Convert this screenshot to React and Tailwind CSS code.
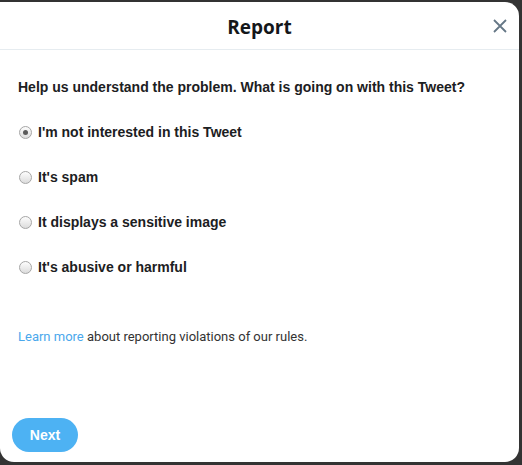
import React, { useState } from "react";

const options = [
  "I'm not interested in this Tweet",
  "It's spam",
  "It displays a sensitive image",
  "It's abusive or harmful",
];

const Radio = ({ checked }) => (
  <span className="flex items-center justify-center w-[13px] h-[13px] rounded-full border border-[#a6a6a6] bg-gradient-to-b from-[#fdfdfd] to-[#dcdcdc] shrink-0">
    {checked && <span className="w-[5px] h-[5px] rounded-full bg-[#5a5a5a]" />}
  </span>
);

export default function App() {
  const [selected, setSelected] = useState(0);

  return (
    <div className="w-[522px] h-[465px] bg-[#333333] pt-[2px] pr-[3px] pb-[3px] font-['Liberation_Sans',Arial,sans-serif]">
      <div className="h-full bg-white rounded-[14px] rounded-tl-none flex flex-col">
        {/* Header */}
        <div className="relative h-[48px] shrink-0 border-b border-[#e6ecf0] flex items-center justify-center pt-[4px]">
          <h2 className="text-[19px] font-bold text-[#14171a] font-['Open_Sans','Noto_Sans',sans-serif] leading-none">
            Report
          </h2>
          <button className="absolute right-[11px] top-[16px] w-[16px] h-[16px] flex items-center justify-center text-[#657786]">
            <svg width="14" height="14" viewBox="0 0 14 14" fill="none" stroke="currentColor" strokeWidth="1.8">
              <path d="M1 1 L13 13 M13 1 L1 13" />
            </svg>
          </button>
        </div>

        {/* Body */}
        <div className="px-[18px] pt-[29px] flex flex-col flex-1">
          <p className="text-[14px] leading-[16px] font-bold text-[#1c2022]">
            Help us understand the problem. What is going on with this Tweet?
          </p>

          <div className="mt-[15px] flex flex-col">
            {options.map((label, i) => (
              <label
                key={label}
                onClick={() => setSelected(i)}
                className="h-[45px] flex items-center gap-[6px] pl-[1px] cursor-pointer"
              >
                <Radio checked={selected === i} />
                <span className="text-[14px] font-bold text-[#1c2022]">{label}</span>
              </label>
            ))}
          </div>

          <p className="mt-[39px] text-[13px] leading-[16px] text-[#333] font-['Roboto',sans-serif]">
            <a href="#" className="text-[#4aa8ec]">Learn more</a> about reporting violations of our rules.
          </p>

          <div className="mt-auto pb-[10px] -ml-[6px]">
            <button className="h-[34px] w-[66px] rounded-full bg-[#4db2f3] text-white text-[14px] font-bold">
              Next
            </button>
          </div>
        </div>
      </div>
    </div>
  );
}
